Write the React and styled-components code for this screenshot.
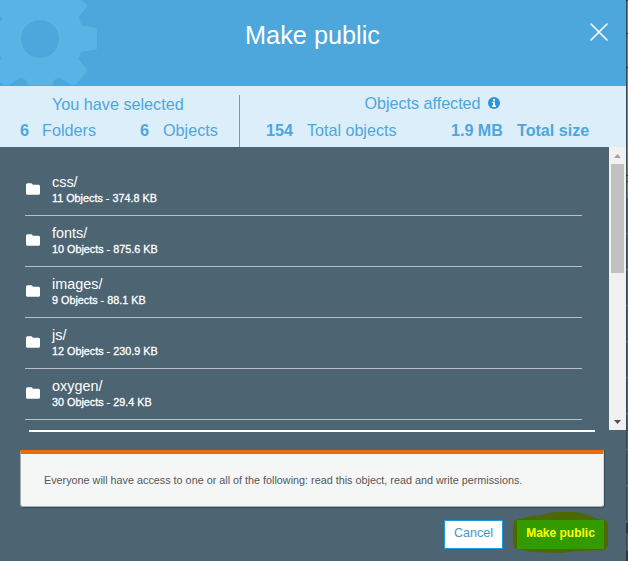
import React from "react";
import styled, { createGlobalStyle } from "styled-components";

const Global = createGlobalStyle`
  * { box-sizing: border-box; }
  body { margin: 0; overflow: hidden; font-family: "Liberation Sans", Arial, sans-serif; }
`;

const Screen = styled.div`
  display: grid;
  grid-template-columns: 626px 2px;
  width: 628px;
  height: 561px;
  overflow: hidden;
`;

const Dialog = styled.main`
  display: flex;
  flex-direction: column;
  background: #4d6473;
`;

const Header = styled.header`
  position: relative;
  flex: none;
  height: 86px;
  overflow: hidden;
  display: flex;
  justify-content: center;
  padding-top: 20px;
  background: #4da7dd;
`;

const Gear = styled.svg`
  position: absolute;
  left: 0;
  top: 0;
`;

const Title = styled.h1`
  margin: 0 1px 0 0;
  font-size: 25.3px;
  line-height: 30px;
  font-weight: 400;
  color: #fff;
`;

const CloseButton = styled.button`
  position: absolute;
  left: 589px;
  top: 22px;
  width: 20px;
  height: 20px;
  padding: 0;
  border: 0;
  background: none;
  svg { display: block; }
`;

const Summary = styled.section`
  flex: none;
  display: grid;
  grid-template-columns: 240px 1fr;
  height: 61px;
  background: #dceef9;
  color: #4da7dd;
  font-size: 16.1px;
`;

const Selected = styled.div`
  margin-top: 9px;
  border-right: 1px solid #4da7dd;
  font-size: 16.2px;
`;

const Affected = styled.div`
  margin-top: 8px;
`;

const SummaryTitle = styled.div`
  display: flex;
  align-items: center;
  gap: 7px;
  height: 18px;
  padding-left: ${(p) => p.$left}px;
  white-space: nowrap;
`;

const Figures = styled.div`
  display: grid;
  grid-template-columns: ${(p) => p.$columns};
  padding-left: ${(p) => p.$left}px;
  margin-top: ${(p) => p.$gap}px;
  line-height: 18px;
  white-space: nowrap;
`;

const ListPane = styled.section`
  flex: none;
  display: grid;
  grid-template-columns: 609px 17px;
  height: 283px;
`;

const List = styled.ul`
  list-style: none;
  margin: 0;
  padding: 18px 27px 0 25px;
`;

const Row = styled.li`
  display: grid;
  grid-template-columns: 27px 1fr;
  height: 51px;
  border-bottom: 1px solid #b9c0c5;
  color: #fff;
`;

const FolderSvg = styled.svg`
  display: block;
  margin: 18px 0 0 1px;
`;

const Name = styled.div`
  margin-top: 9px;
  font-size: 14.4px;
  line-height: 17px;
`;

const Meta = styled.div`
  font-size: 10.8px;
  line-height: 14px;
  -webkit-text-stroke: 0.3px #fff;
`;

const Scrollbar = styled.div`
  display: grid;
  grid-template-rows: 17px 109px 1fr 17px;
  justify-items: center;
  background: #f1f1f1;
`;

const Arrow = styled.svg`
  align-self: center;
`;

const Thumb = styled.div`
  width: 13px;
  background: #c1c1c1;
`;

const Divider = styled.div`
  flex: none;
  width: 566px;
  height: 2px;
  margin-left: 29px;
  background: #fff;
`;

const Notice = styled.p`
  flex: none;
  width: 584px;
  height: 57px;
  margin: 18px 0 0 20px;
  padding: 19px 23px 0;
  border: 1px solid #a9b0b2;
  border-top: 4px solid #ed6b06;
  border-right-color: #d4d8d8;
  border-radius: 0 0 3px 3px;
  background: #f5f7f7;
  box-shadow: 1px 1px 1px rgba(20, 35, 45, 0.35);
  color: #555;
  font-size: 10.8px;
  line-height: 14px;
  white-space: nowrap;
`;

const Actions = styled.footer`
  display: flex;
  gap: 14px;
  margin: 13px 0 0 444px;
`;

const Button = styled.button`
  height: 29px;
  padding: 0 0 3px;
  margin: 0;
  font: ${(p) => (p.$primary ? "bold" : "normal")} ${(p) => (p.$primary ? 12 : 12.6)}px "Liberation Sans", Arial, sans-serif;
  width: ${(p) => (p.$primary ? 87 : 59)}px;
  border: ${(p) => (p.$primary ? "0" : "1px solid #1f97e0")};
  background: ${(p) => (p.$primary ? "#339a00" : "#fff")};
  color: ${(p) => (p.$primary ? "#ff0" : "#4595cf")};
`;

const Marked = styled.div`
  position: relative;
  height: 29px;
  ${Button} { position: relative; display: block; }
`;

const Highlight = styled.svg`
  position: absolute;
  left: -4px;
  top: -8px;
`;

const Edge = styled.aside`
  height: 561px;
`;

const folders = [
  ["css/", "11 Objects - 374.8 KB"],
  ["fonts/", "10 Objects - 875.6 KB"],
  ["images/", "9 Objects - 88.1 KB"],
  ["js/", "12 Objects - 230.9 KB"],
  ["oxygen/", "30 Objects - 29.4 KB"],
];

const edgeMarks = [0, 33, 67, 175, 181, 233, 269, 305, 341, 377, 413, 449, 485, 521];

export default function App() {
  return (
    <>
      <Global />
      <Screen>
        <Dialog>
          <Header>
            <Gear width="100" height="86" viewBox="0 0 100 86">
              <path
                fill="#57b4e4"
                fillRule="evenodd"
                d="M0 0H82L86.5 5Q87.5 6 86.5 7.5L79 16L81 24.5Q82 26 84 26L94 27.5Q97 28 97 31V48Q97 50 94 50L84 51.5Q81.5 52 81 53L78.5 59L86.5 69Q87.5 70.5 86.5 72L77 83.5Q74 86 70 84.5L60 77.5L54 80L52 86H28L26 80L20 77.5L10 85Q7 86 4 85L0 82V61L2 58L0 55V22L2 19L0 16ZM59 39A19 19 0 1 0 21 39A19 19 0 1 0 59 39Z"
              />
              <path d="M28 85.5H53" stroke="#7c9eae" />
            </Gear>
            <Title>Make public</Title>
            <CloseButton aria-label="Close">
              <svg width="20" height="20" viewBox="0 0 20 20">
                <path d="M2 2L18 18M18 2L2 18" stroke="#fff" strokeWidth="1.6" strokeLinecap="round" />
              </svg>
            </CloseButton>
          </Header>
          <Summary>
            <Selected>
              <SummaryTitle $left={52}>You have selected</SummaryTitle>
              <Figures $columns="22px 98px 23px 1fr" $left={20} $gap={8}>
                <b>6</b><span>Folders</span><b>6</b><span>Objects</span>
              </Figures>
            </Selected>
            <Affected>
              <SummaryTitle $left={124.5}>
                Objects affected
                <svg width="12" height="12" viewBox="0 0 12 12">
                  <circle cx="6" cy="6" r="6" fill="#2e96d8" />
                  <path d="M5 2H7V3.7H5ZM4.2 4.8H7V8.6H8V10H4V8.6H5V6H4.2Z" fill="#fff" />
                </svg>
              </SummaryTitle>
              <Figures $columns="41px 144px 66px 1fr" $left={26} $gap={9}>
                <b>154</b><span>Total objects</span><b>1.9 MB</b><b>Total size</b>
              </Figures>
            </Affected>
          </Summary>
          <ListPane>
            <List>
              {folders.map(([name, meta]) => (
                <Row key={name}>
                  <FolderSvg width="14" height="12" viewBox="0 0 14 12">
                    <path d="M1.5 .3H5.2Q6 .3 6.4 1L6.9 1.8H12.5Q14 1.8 14 3.3V10.3Q14 11.8 12.5 11.8H1.5Q0 11.8 0 10.3V1.8Q0 .3 1.5 .3Z" fill="#fff" />
                  </FolderSvg>
                  <div>
                    <Name>{name}</Name>
                    <Meta>{meta}</Meta>
                  </div>
                </Row>
              ))}
            </List>
            <Scrollbar>
              <Arrow width="7" height="4" viewBox="0 0 7 4"><path d="M3.5 0L7 4H0Z" fill="#a3a3a3" /></Arrow>
              <Thumb />
              <span />
              <Arrow width="7" height="4" viewBox="0 0 7 4"><path d="M0 0H7L3.5 4Z" fill="#505050" /></Arrow>
            </Scrollbar>
          </ListPane>
          <Divider />
          <Notice>Everyone will have access to one or all of the following: read this object, read and write permissions.</Notice>
          <Actions>
            <Button>Cancel</Button>
            <Marked>
              <Highlight width="96" height="41" viewBox="0 0 96 41">
                <path d="M1 9Q12 4 30 3Q35 0 48 0H62Q78 2 84 7L91 8Q95 9 95 15V32Q95 36 90 38L65 39L48 41L18 40L1 36Q-1 22 1 9Z" fill="#4e6800" />
              </Highlight>
              <Button $primary>Make public</Button>
            </Marked>
          </Actions>
        </Dialog>
        <Edge>
          <svg width="2" height="561" viewBox="0 0 2 561">
            <path d="M0 0H2V198H0Z" fill="#7e7e7e" />
            <path d="M0 198H2V561H0Z" fill="#35657a" />
            <path d="M.5 0V561" stroke="#354b58" />
            {edgeMarks.map((y) => <path key={y} d={`M0 ${y + 0.5}H2`} stroke={y < 200 ? "#333" : "#527c90"} />)}
            <path d="M0 523H2V533H0ZM0 551H2V561H0Z" fill="#333" />
          </svg>
        </Edge>
      </Screen>
    </>
  );
}
